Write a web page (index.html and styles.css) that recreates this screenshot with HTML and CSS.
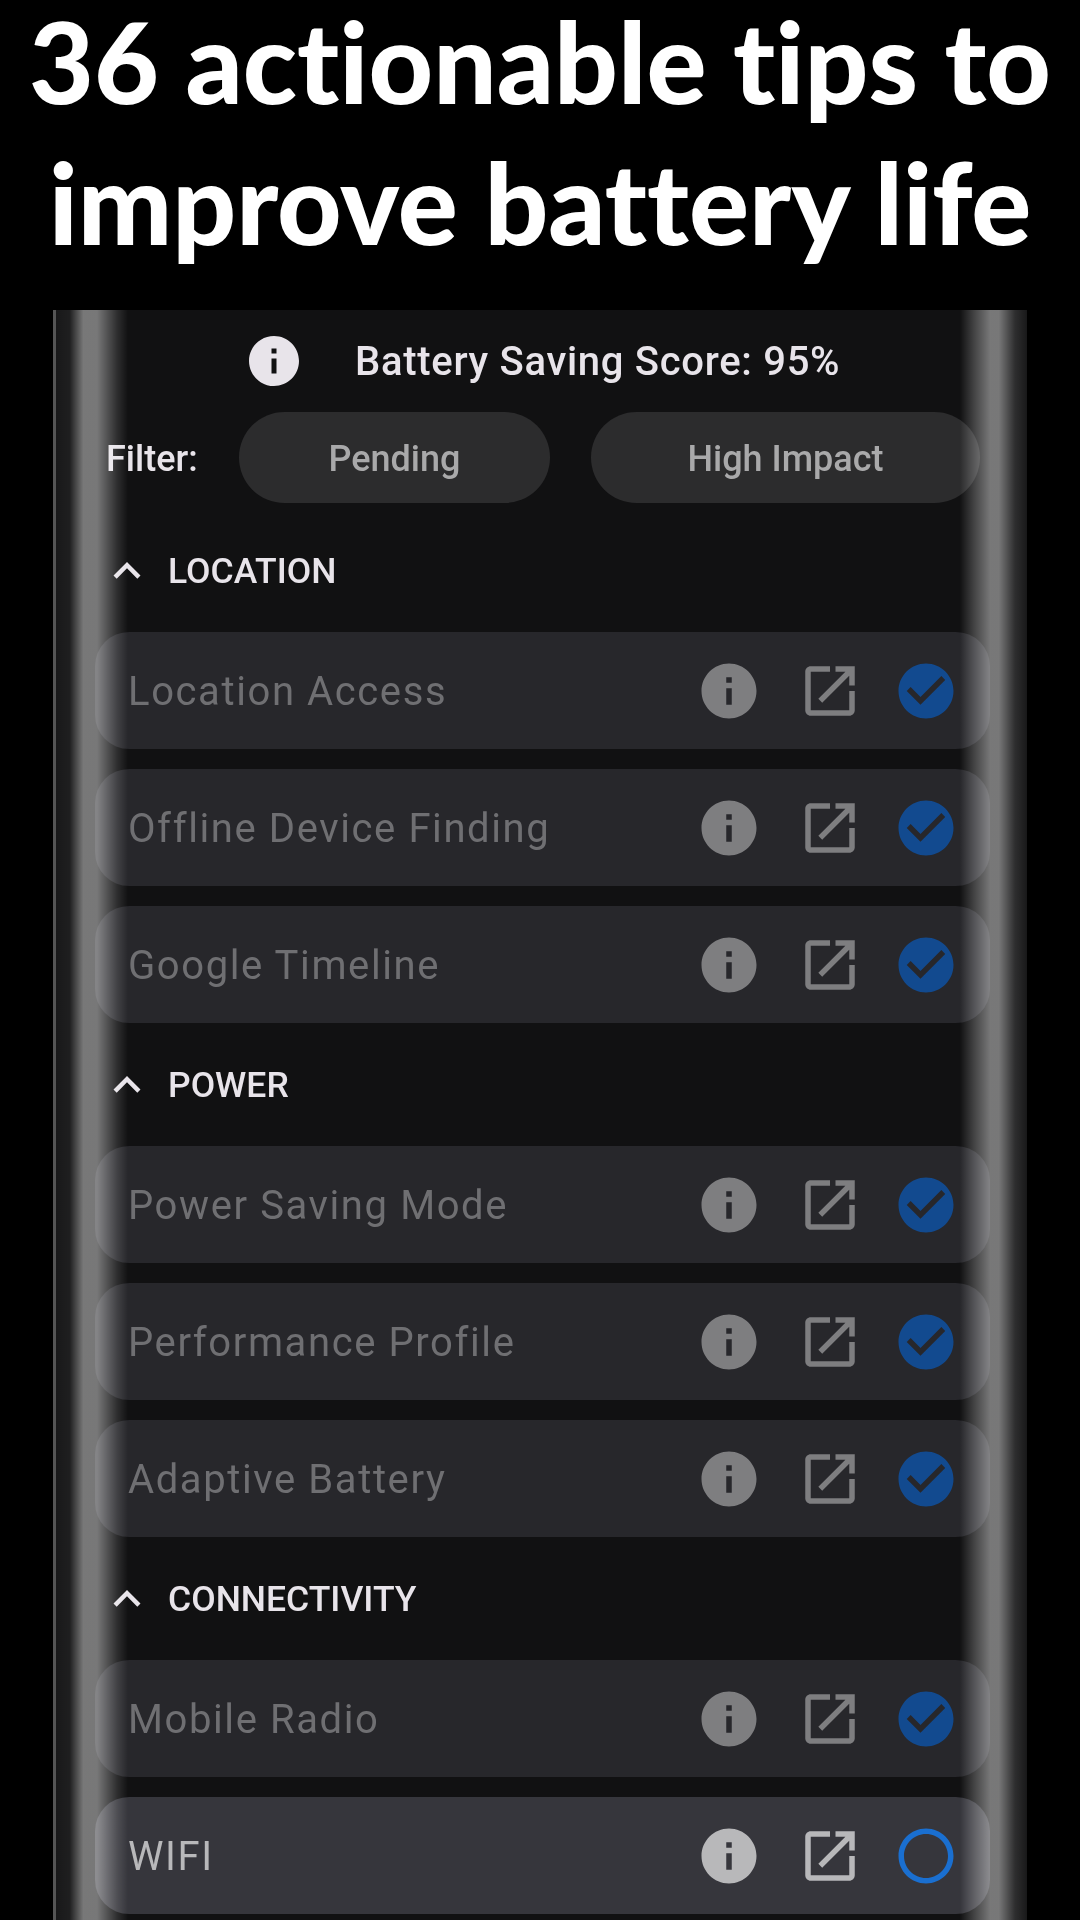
FILE: index.html
```html
<!DOCTYPE html>
<html lang="en">
<head>
    <meta charset="UTF-8">
    <meta name="viewport" content="width=device-width, initial-scale=1.0">
    <title>36 actionable tips to improve battery life</title>
    <link rel="stylesheet" href="styles.css">
</head>
<body>

<svg class="defs" width="0" height="0">
    <symbol id="i-info" viewBox="0 0 24 24"><path d="M12 2C6.48 2 2 6.48 2 12s4.48 10 10 10 10-4.48 10-10S17.52 2 12 2zm1 15h-2v-6h2v6zm0-8h-2V7h2v2z"/></symbol>
    <symbol id="i-open" viewBox="0 0 24 24"><path d="M19 19H5V5h7V3H5c-1.11 0-2 .9-2 2v14c0 1.1.89 2 2 2h14c1.1 0 2-.9 2-2v-7h-2v7zM14 3v2h3.59l-9.83 9.83 1.41 1.41L19 6.41V10h2V3h-7z"/></symbol>
    <symbol id="i-done" viewBox="0 0 24 24"><path d="M12 2C6.48 2 2 6.48 2 12s4.48 10 10 10 10-4.48 10-10S17.52 2 12 2zm-2 15l-5-5 1.41-1.41L10 14.17l7.59-7.59L19 8l-9 9z"/></symbol>
    <symbol id="i-todo" viewBox="0 0 24 24"><path d="M12 2C6.47 2 2 6.47 2 12s4.47 10 10 10 10-4.47 10-10S17.53 2 12 2zm0 18c-4.41 0-8-3.59-8-8s3.59-8 8-8 8 3.59 8 8-3.59 8-8 8z"/></symbol>
    <symbol id="i-less" viewBox="0 0 24 24"><path d="M12 8l-6 6 1.41 1.41L12 10.83l4.59 4.58L18 14z"/></symbol>
</svg>

<h1 class="headline">
    <span class="headline-line">36 actionable tips to</span>
    <span class="headline-line">improve battery life</span>
</h1>

<div class="screen">
    <div class="edge edge-left"></div>
    <div class="edge edge-right"></div>

    <div class="score">
        <svg class="score-icon"><use href="#i-info"/></svg>
        <span>Battery Saving Score: 95%</span>
    </div>

    <div class="filter">
        <span class="filter-label">Filter:</span>
        <button class="pill pill-pending">Pending</button>
        <button class="pill pill-impact">High Impact</button>
    </div>

    <div class="section first">
        <svg class="chevron"><use href="#i-less"/></svg>
        <span>LOCATION</span>
    </div>
    <div class="tip done">
        <span class="tip-name">Location Access</span>
        <svg class="ico"><use href="#i-info"/></svg>
        <svg class="ico open"><use href="#i-open"/></svg>
        <svg class="ico state"><use href="#i-done"/></svg>
    </div>
    <div class="tip done">
        <span class="tip-name">Offline Device Finding</span>
        <svg class="ico"><use href="#i-info"/></svg>
        <svg class="ico open"><use href="#i-open"/></svg>
        <svg class="ico state"><use href="#i-done"/></svg>
    </div>
    <div class="tip done">
        <span class="tip-name">Google Timeline</span>
        <svg class="ico"><use href="#i-info"/></svg>
        <svg class="ico open"><use href="#i-open"/></svg>
        <svg class="ico state"><use href="#i-done"/></svg>
    </div>

    <div class="section">
        <svg class="chevron"><use href="#i-less"/></svg>
        <span>POWER</span>
    </div>
    <div class="tip done">
        <span class="tip-name">Power Saving Mode</span>
        <svg class="ico"><use href="#i-info"/></svg>
        <svg class="ico open"><use href="#i-open"/></svg>
        <svg class="ico state"><use href="#i-done"/></svg>
    </div>
    <div class="tip done">
        <span class="tip-name">Performance Profile</span>
        <svg class="ico"><use href="#i-info"/></svg>
        <svg class="ico open"><use href="#i-open"/></svg>
        <svg class="ico state"><use href="#i-done"/></svg>
    </div>
    <div class="tip done">
        <span class="tip-name">Adaptive Battery</span>
        <svg class="ico"><use href="#i-info"/></svg>
        <svg class="ico open"><use href="#i-open"/></svg>
        <svg class="ico state"><use href="#i-done"/></svg>
    </div>

    <div class="section">
        <svg class="chevron"><use href="#i-less"/></svg>
        <span>CONNECTIVITY</span>
    </div>
    <div class="tip done">
        <span class="tip-name">Mobile Radio</span>
        <svg class="ico"><use href="#i-info"/></svg>
        <svg class="ico open"><use href="#i-open"/></svg>
        <svg class="ico state"><use href="#i-done"/></svg>
    </div>
    <div class="tip">
        <span class="tip-name">WIFI</span>
        <svg class="ico"><use href="#i-info"/></svg>
        <svg class="ico open"><use href="#i-open"/></svg>
        <svg class="ico state"><use href="#i-todo"/></svg>
    </div>
</div>

</body>
</html>
```

FILE: styles.css
```css
body {
    background-color: black;
    color: white;
    font-family: Roboto, sans-serif;
    margin: 0;
    width: 1080px;
    height: 1920px;
    overflow: hidden;
}
.defs {
    position: absolute;
}
.headline {
    height: 310px;
    margin: 0;
    font-family: Lato, sans-serif;
    font-size: 112px;
    font-weight: 900;
    font-variant-ligatures: none;
    text-align: center;
    white-space: nowrap;
}
.headline-line {
    display: block;
    height: 141px;
    line-height: 121px;
}
.screen {
    position: relative;
    box-sizing: border-box;
    width: 974px;
    height: 1610px;
    margin-left: 53px;
    padding: 0 37px 0 39px;
    border-left: 3px solid #555;
    background-color: #111112;
    overflow: hidden;
    filter: blur(0.5px);
}
/* the curved glass highlights lie over the list */
.edge {
    position: absolute;
    top: 0;
    bottom: 0;
    z-index: 2;
    pointer-events: none;
}
.edge-left {
    left: 0;
    width: 72px;
    background: linear-gradient(to right, rgba(255,255,255,0.03) 0%, rgba(255,255,255,0.06) 19%, rgba(255,255,255,0.43) 38%, rgba(255,255,255,0.43) 57%, rgba(255,255,255,0.12) 85%, rgba(255,255,255,0) 100%);
}
.edge-right {
    right: 0;
    width: 67px;
    background: linear-gradient(to right, rgba(255,255,255,0) 0%, rgba(255,255,255,0.2) 20%, rgba(255,255,255,0.43) 45%, rgba(255,255,255,0.43) 58%, rgba(255,255,255,0.12) 82%, rgba(255,255,255,0.03) 100%);
}
.score {
    display: flex;
    align-items: center;
    height: 102px;
    padding-left: 149px;
    font-size: 40px;
    font-weight: 500;
    letter-spacing: 0.7px;
    color: #e8e4ea;
}
.score-icon {
    width: 60px;
    height: 60px;
    margin-right: 51px;
    fill: #e8e4ea;
}
.filter {
    display: flex;
    align-items: center;
    height: 91px;
    padding-left: 11px;
}
.filter-label {
    width: 133px;
    padding-top: 2px;
    font-size: 36px;
    font-weight: 500;
    color: #e8e4ea;
}
.pill {
    height: 91px;
    padding-top: 3px;
    border: none;
    border-radius: 46px;
    background-color: #2c2c2d;
    color: #a9a9aa;
    font-family: Roboto, sans-serif;
    font-size: 36px;
    font-weight: 500;
}
.pill-pending {
    width: 311px;
    margin-right: 41px;
}
.pill-impact {
    width: 389px;
}
.section {
    display: flex;
    align-items: center;
    gap: 14px;
    height: 123px;
    padding-left: 5px;
    font-size: 35.5px;
    font-weight: 500;
    color: #e8e4ea;
}
.section.first {
    margin-top: 6px;
}
.chevron {
    width: 54px;
    height: 54px;
    fill: #e8e4ea;
}
.tip {
    display: flex;
    align-items: center;
    height: 117px;
    margin-bottom: 20px;
    padding: 0 31px 0 33px;
    border-radius: 34px;
    background-color: #36363c;
    color: #b8b8ba;
    fill: #b8b8ba;
}
.tip.done {
    background-color: #27272b;
    color: #6f6f72;
    fill: #7e7e80;
}
.tip:has(+ .section) {
    margin-bottom: 0;
}
.tip-name {
    flex: 1;
    padding-top: 2px;
    font-size: 40px;
    letter-spacing: 1.6px;
}
.ico {
    width: 66px;
    height: 66px;
    flex: none;
}
.open {
    margin: 0 30px 0 35px;
}
.state {
    fill: #1a6fd0;
}
.tip.done .state {
    fill: #124a8f;
}
```
